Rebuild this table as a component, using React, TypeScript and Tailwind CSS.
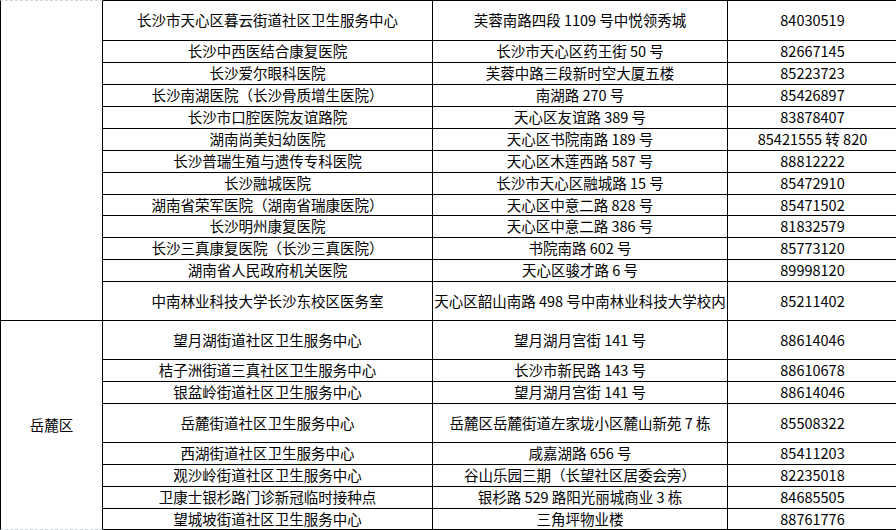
import React from "react";

type Row = { name: string; addr: string; tel: string; h: string };

const groups: { region: string; first: boolean; rows: Row[] }[] = [
  {
    region: "",
    first: true,
    rows: [
      { name: "长沙市天心区暮云街道社区卫生服务中心", addr: "芙蓉南路四段 1109 号中悦领秀城", tel: "84030519", h: "h-[40px]" },
      { name: "长沙中西医结合康复医院", addr: "长沙市天心区药王街 50 号", tel: "82667145", h: "h-[22px]" },
      { name: "长沙爱尔眼科医院", addr: "芙蓉中路三段新时空大厦五楼", tel: "85223723", h: "h-[22px]" },
      { name: "长沙南湖医院（长沙骨质增生医院）", addr: "南湖路 270 号", tel: "85426897", h: "h-[22px]" },
      { name: "长沙市口腔医院友谊路院", addr: "天心区友谊路 389 号", tel: "83878407", h: "h-[22px]" },
      { name: "湖南尚美妇幼医院", addr: "天心区书院南路 189 号", tel: "85421555 转 820", h: "h-[22px]" },
      { name: "长沙普瑞生殖与遗传专科医院", addr: "天心区木莲西路 587 号", tel: "88812222", h: "h-[22px]" },
      { name: "长沙融城医院", addr: "长沙市天心区融城路 15 号", tel: "85472910", h: "h-[22px]" },
      { name: "湖南省荣军医院（湖南省瑞康医院）", addr: "天心区中意二路 828 号", tel: "85471502", h: "h-[21px]" },
      { name: "长沙明州康复医院", addr: "天心区中意二路 386 号", tel: "81832579", h: "h-[22px]" },
      { name: "长沙三真康复医院（长沙三真医院）", addr: "书院南路 602 号", tel: "85773120", h: "h-[22px]" },
      { name: "湖南省人民政府机关医院", addr: "天心区骏才路 6 号", tel: "89998120", h: "h-[22px]" },
      { name: "中南林业科技大学长沙东校区医务室", addr: "天心区韶山南路 498 号中南林业科技大学校内", tel: "85211402", h: "h-[39px]" },
    ],
  },
  {
    region: "岳麓区",
    first: false,
    rows: [
      { name: "望月湖街道社区卫生服务中心", addr: "望月湖月宫街 141 号", tel: "88614046", h: "h-[39px]" },
      { name: "桔子洲街道三真社区卫生服务中心", addr: "长沙市新民路 143 号", tel: "88610678", h: "h-[22px]" },
      { name: "银盆岭街道社区卫生服务中心", addr: "望月湖月宫街 141 号", tel: "88614046", h: "h-[22px]" },
      { name: "岳麓街道社区卫生服务中心", addr: "岳麓区岳麓街道左家垅小区麓山新苑 7 栋", tel: "85508322", h: "h-[39px]" },
      { name: "西湖街道社区卫生服务中心", addr: "咸嘉湖路 656 号", tel: "85411203", h: "h-[22px]" },
      { name: "观沙岭街道社区卫生服务中心", addr: "谷山乐园三期（长望社区居委会旁）", tel: "82235018", h: "h-[22px]" },
      { name: "卫康士银杉路门诊新冠临时接种点", addr: "银杉路 529 路阳光丽城商业 3 栋", tel: "84685505", h: "h-[22px]" },
      { name: "望城坡街道社区卫生服务中心", addr: "三角坪物业楼", tel: "88761776", h: "h-[21px]" },
    ],
  },
];

export default function App() {
  return (
    <div className="w-[896px] h-[530px] overflow-hidden bg-white text-black text-[14.5px] leading-none font-['Noto_Sans_CJK_SC',sans-serif]">
      <div className="w-[898px]">
        {groups.map((g) => (
          <div key={g.region || "tianxin"} className="flex">
            {/* region cell spans the whole group; dashed grey edge = page break */}
            <div
              className={
                g.first
                  ? "w-[103px] shrink-0 border-l border-r border-b border-t border-black border-t-gray-300 [border-top-style:dashed] flex items-center justify-center"
                  : "w-[103px] shrink-0 border-l border-r border-b border-black border-b-gray-300 [border-bottom-style:dashed] flex items-center justify-center"
              }
            >
              {g.region}
            </div>
            <div className={g.first ? "flex-1 border-t border-black" : "flex-1"}>
              {g.rows.map((r, i) => (
                <div key={i} className={`flex border-b border-black ${r.h}`}>
                  <div className="w-[330px] shrink-0 border-r border-black flex items-center justify-center whitespace-nowrap">
                    {r.name}
                  </div>
                  <div className="w-[295px] shrink-0 border-r border-black flex items-center justify-center whitespace-nowrap overflow-hidden">
                    {r.addr}
                  </div>
                  <div className="w-[170px] shrink-0 border-r border-black flex items-center justify-center whitespace-nowrap">
                    {r.tel}
                  </div>
                </div>
              ))}
            </div>
          </div>
        ))}
      </div>
    </div>
  );
}
